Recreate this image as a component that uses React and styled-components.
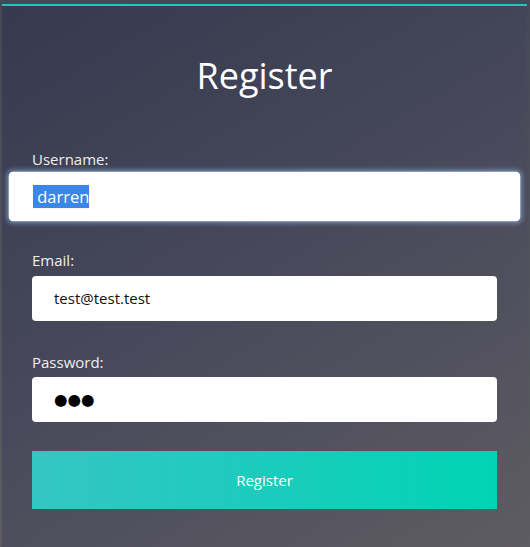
import React from "react";
import styled, { createGlobalStyle } from "styled-components";

const Global = createGlobalStyle`
  html, body {
    margin: 0;
    padding: 0;
    height: 100%;
  }
  body {
    background: linear-gradient(180deg, #454856 0%, #5d5c62 100%);
    font-family: "Open Sans", "Noto Sans", sans-serif;
    overflow: hidden;
  }
`;

const Page = styled.div`
  padding: 4px 3px 0 2px;
  height: 547px;
  box-sizing: border-box;
`;

const Card = styled.form`
  height: 100%;
  box-sizing: border-box;
  border-top: 2px solid #1cc9bf;
  background: linear-gradient(150deg, #363a4e 0%, #46475a 45%, #5e5c62 100%);
  padding: 45px 30px 0 30px;
  display: flex;
  flex-direction: column;
`;

const Title = styled.h1`
  margin: 0 0 49px;
  text-align: center;
  color: #ffffff;
  font-weight: 400;
  font-size: 36px;
  line-height: 1.362;
`;

const Field = styled.div`
  display: flex;
  flex-direction: column;
  margin-bottom: 31px;
`;

const Label = styled.label`
  color: #f1efec;
  font-size: 15px;
  line-height: 1.362;
  margin-bottom: 5px;
`;

const inputBase = `
  box-sizing: border-box;
  width: 100%;
  height: 45px;
  border: none;
  border-radius: 4px;
  background: #ffffff;
  padding: 0 22px;
  font-family: "Open Sans", "Noto Sans", sans-serif;
  font-size: 15px;
  color: #111;
  outline: none;
`;

const Input = styled.input`
  ${inputBase}
  ${(p) =>
    p.$masked &&
    `
    font-family: "DejaVu Sans", sans-serif;
    font-size: 15.5px;
    color: #000;
  `}
`;

const FocusedBox = styled.div`
  ${inputBase}
  display: flex;
  align-items: center;
  transform: scale(1.1);
  box-shadow: 0 0 5px 1px rgba(150, 195, 245, 0.6);
`;

const Selected = styled.span`
  background: #3b86e6;
  color: #ffffff;
  line-height: 1.362;
  white-space: pre;
`;

const Button = styled.button`
  margin-top: -2px;
  height: 58px;
  width: 100%;
  border: none;
  background: linear-gradient(90deg, #35c6c2 0%, #1ecbbd 45%, #00d4b4 100%);
  color: #ffffff;
  font-family: "Open Sans", "Noto Sans", sans-serif;
  font-size: 15px;
  cursor: pointer;
`;

export default function App() {
  return (
    <>
      <Global />
      <Page>
        <Card onSubmit={(e) => e.preventDefault()}>
          <Title>Register</Title>
          <Field>
            <Label>Username:</Label>
            <FocusedBox>
              <Selected>{" darren"}</Selected>
            </FocusedBox>
          </Field>
          <Field>
            <Label>Email:</Label>
            <Input type="email" defaultValue="test@test.test" readOnly />
          </Field>
          <Field>
            <Label>Password:</Label>
            <Input $masked type="text" defaultValue="●●●" readOnly aria-label="password" />
          </Field>
          <Button type="submit">Register</Button>
        </Card>
      </Page>
    </>
  );
}
